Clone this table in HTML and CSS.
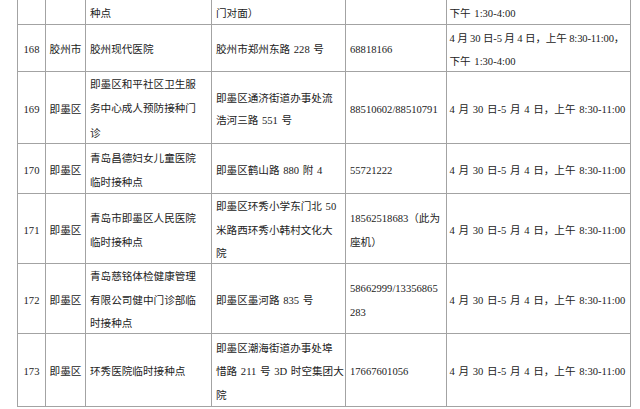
FILE: index.html
```html
<!DOCTYPE html>
<html lang="zh-CN">
<head>
<meta charset="utf-8">
<title>接种点列表</title>
<link rel="stylesheet" href="styles.css">
</head>
<body>
<div class="sheet" role="table">
  <div class="c c-c" role="cell"></div>
  <div class="c c-c" role="cell"></div>
  <div class="c c-l c-end" role="cell"><div>种点</div></div>
  <div class="c c-l c-end" role="cell"><div>门对面）</div></div>
  <div class="c c-l" role="cell"></div>
  <div class="c c-r c-end" role="cell"><div>下午 1:30-4:00</div></div>

  <div class="c c-c" role="cell"><div>168</div></div>
  <div class="c c-c" role="cell"><div>胶州市</div></div>
  <div class="c c-l" role="cell"><div>胶州现代医院</div></div>
  <div class="c c-l" role="cell"><div>胶州市郑州东路 228 号</div></div>
  <div class="c c-l" role="cell"><div>68818166</div></div>
  <div class="c c-r" role="cell"><div><span class="squeeze">4 月 30 日-5 月 4 日，上午 8:30-11:00，</span><br>下午 1:30-4:00</div></div>

  <div class="c c-c" role="cell"><div>169</div></div>
  <div class="c c-c" role="cell"><div>即墨区</div></div>
  <div class="c c-l" role="cell"><div class="tall">即墨区和平社区卫生服<br>务中心成人预防接种门<br>诊</div></div>
  <div class="c c-l" role="cell"><div class="tight">即墨区通济街道办事处流<br>浩河三路 551 号</div></div>
  <div class="c c-l" role="cell"><div>88510602/88510791</div></div>
  <div class="c c-r" role="cell"><div>4 月 30 日-5 月 4 日，上午 8:30-11:00</div></div>

  <div class="c c-c" role="cell"><div>170</div></div>
  <div class="c c-c" role="cell"><div>即墨区</div></div>
  <div class="c c-l" role="cell"><div>青岛昌德妇女儿童医院<br>临时接种点</div></div>
  <div class="c c-l" role="cell"><div>即墨区鹤山路 880 附 4</div></div>
  <div class="c c-l" role="cell"><div>55721222</div></div>
  <div class="c c-r" role="cell"><div>4 月 30 日-5 月 4 日，上午 8:30-11:00</div></div>

  <div class="c c-c" role="cell"><div>171</div></div>
  <div class="c c-c" role="cell"><div>即墨区</div></div>
  <div class="c c-l" role="cell"><div>青岛市即墨区人民医院<br>临时接种点</div></div>
  <div class="c c-l" role="cell"><div>即墨区环秀小学东门北 50<br>米路西环秀小韩村文化大<br>院</div></div>
  <div class="c c-l" role="cell"><div>18562518683（此为<br>座机）</div></div>
  <div class="c c-r" role="cell"><div>4 月 30 日-5 月 4 日，上午 8:30-11:00</div></div>

  <div class="c c-c" role="cell"><div>172</div></div>
  <div class="c c-c" role="cell"><div>即墨区</div></div>
  <div class="c c-l" role="cell"><div>青岛慈铭体检健康管理<br>有限公司健中门诊部临<br>时接种点</div></div>
  <div class="c c-l" role="cell"><div>即墨区墨河路 835 号</div></div>
  <div class="c c-l" role="cell"><div>58662999/13356865<br>283</div></div>
  <div class="c c-r" role="cell"><div>4 月 30 日-5 月 4 日，上午 8:30-11:00</div></div>

  <div class="c c-c" role="cell"><div>173</div></div>
  <div class="c c-c" role="cell"><div>即墨区</div></div>
  <div class="c c-l" role="cell"><div>环秀医院临时接种点</div></div>
  <div class="c c-l" role="cell"><div>即墨区潮海街道办事处埠<br>惜路 211 号 3D 时空集团大<br>院</div></div>
  <div class="c c-l" role="cell"><div>17667601056</div></div>
  <div class="c c-r" role="cell"><div>4 月 30 日-5 月 4 日，上午 8:30-11:00</div></div>
</div>
</body>
</html>
```

FILE: styles.css
```css
html, body {
  margin: 0;
  padding: 0;
  background: #ffffff;
  overflow: hidden;
}

body {
  width: 640px;
  height: 409px;
  font-family: "Liberation Serif", "Noto Sans CJK SC", serif;
  font-size: 10.6px;
  color: #222222;
}

.sheet {
  display: grid;
  grid-template-columns: 27px 39px 125px 133px 100px 183px;
  grid-template-rows: 46px 46px 71px 49px 69px 69px 72px;
  gap: 1px;
  padding: 1px;
  width: max-content;
  margin: -23px 0 0 17px;
  background: #a3a3a3;
}

.c {
  display: flex;
  align-items: center;
  padding-top: 4px;
  background: #ffffff;
  line-height: 23.5px;
  white-space: nowrap;
  word-spacing: 1px;
  overflow: hidden;
}

.c-c {
  justify-content: center;
}

.c-l {
  padding-left: 4px;
}

.c-r {
  padding-left: 2.5px;
}

.c-end {
  align-items: flex-end;
  padding-bottom: 0;
}

.c-end > div {
  margin-bottom: -1px;
}

.squeeze {
  word-spacing: 0;
  letter-spacing: -0.15px;
}

.tall {
  line-height: 24.5px;
}

.tight {
  line-height: 22px;
}
```
